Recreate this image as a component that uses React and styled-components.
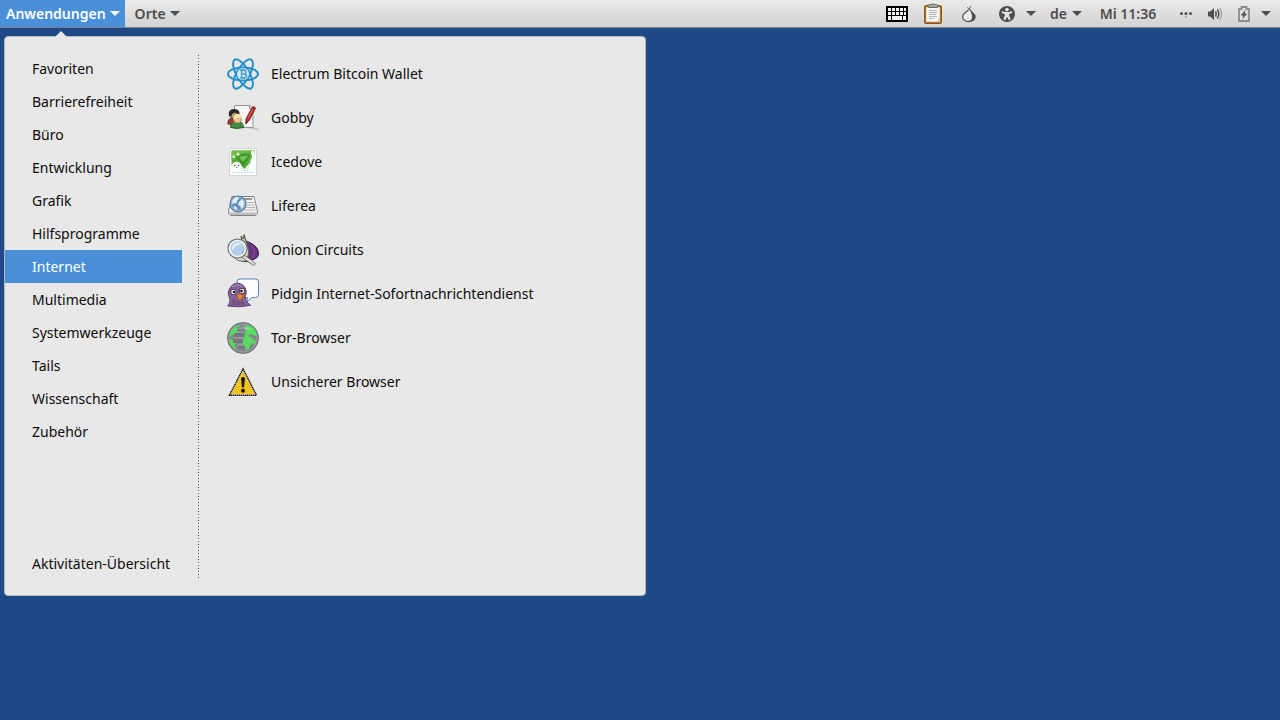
import React, { useState } from "react";
import styled, { createGlobalStyle } from "styled-components";

const GlobalStyle = createGlobalStyle`
  * {
    box-sizing: border-box;
  }
  body {
    margin: 0;
    background: #204a87;
    font-family: "Noto Sans", sans-serif;
    font-size: 14px;
    color: #0c0c0c;
  }
  button {
    font: inherit;
    color: inherit;
    border: none;
    background: none;
    padding: 0;
  }
  svg {
    display: block;
    flex: none;
  }
`;

const Desktop = styled.div`
  min-height: 100vh;
  background: #204a87;
`;

const TopBar = styled.header`
  display: flex;
  justify-content: space-between;
  height: 28px;
  padding-right: 9px;
  background: linear-gradient(#eaeaea, #d2d2d2);
  border-bottom: 1px solid #7d838c;
  color: #4d4d4d;
  font-weight: 600;
`;

const BarGroup = styled.div`
  display: flex;
  align-items: stretch;
  gap: ${({ $gap }) => $gap || 0}px;
`;

const MenuButton = styled.button`
  display: flex;
  align-items: center;
  gap: 4px;
  padding: 0 5px 0 ${({ $active }) => ($active ? 6 : 10)}px;
  background: ${({ $active }) => ($active ? "#4a90d9" : "transparent")};
  color: ${({ $active }) => ($active ? "#ffffff" : "#4d4d4d")};
`;

const TrayButton = styled.button`
  display: flex;
  align-items: center;
  gap: ${({ $gap }) => $gap || 5}px;
`;

const Clock = styled(TrayButton)`
  justify-content: center;
  min-width: 64px;
`;

const IconBox = styled.span`
  display: flex;
  align-items: center;
  justify-content: center;
  width: 24px;
  height: 24px;
`;

const Menu = styled.nav`
  position: relative;
  display: flex;
  width: min(642px, calc(100% - 8px));
  margin: 8px 4px 0;
  padding: 15px 0;
  background: #e8e8e8;
  border: 1px solid #b4b8bd;
  border-radius: 4px;
`;

const Pointer = styled.svg`
  position: absolute;
  left: 49px;
  top: -7px;
`;

const Sidebar = styled.div`
  display: flex;
  flex-direction: column;
  width: 177px;
`;

const Category = styled.button`
  height: 33px;
  padding-left: 27px;
  text-align: left;
  white-space: nowrap;
  background: ${({ $active }) => ($active ? "#4a90d9" : "transparent")};
  color: ${({ $active }) => ($active ? "#ffffff" : "#0c0c0c")};
`;

const Overview = styled(Category)`
  margin-top: 99px;
`;

const Separator = styled.div`
  width: 1px;
  margin: 3px 16px 0;
  background: repeating-linear-gradient(#5c5c5c 0 1px, transparent 1px 3px);
`;

const AppList = styled.div`
  display: flex;
  flex: 1;
  flex-direction: column;
  padding-left: 12px;
`;

const AppItem = styled.button`
  display: flex;
  align-items: center;
  gap: 12px;
  height: 44px;
  line-height: 20px;
  text-align: left;
`;

const Arrow = () => (
  <svg width="10" height="5" viewBox="0 0 10 5" fill="currentColor">
    <path d="M0 0h10L5 5z" />
  </svg>
);

const KeyboardIcon = () => (
  <svg width="22" height="16" viewBox="0 0 22 16">
    <path fill="#000" d="M0 0h22v16H0z" />
    <path
      fill="#f4f4f4"
      d="M2 2h3v3H2zM6 2h3v3H6zM10 2h3v3h-3zM14 2h3v3h-3zM18 2h2v3h-2zM2 6h3v3H2zM6 6h3v3H6zM10 6h3v3h-3zM14 6h3v3h-3zM18 6h2v3h-2zM2 10h3v4H2zM6 10h10v4H6zM17 10h3v4h-3z"
    />
  </svg>
);

const ClipboardIcon = () => (
  <svg width="20" height="22" viewBox="0 0 20 22">
    <rect x="1.500" y="2.500" width="17" height="18" rx="1.500" fill="#b8762a" stroke="#8a5514" />
    <path d="M3.500 4.500h13v14h-13z" fill="#f7f7f5" stroke="#ddd9cf" />
    <path d="M5.500 4.500V2.500q0-1 1-1h2q1.500-1.500 3 0h2q1 0 1 1v2z" fill="#a5a69f" stroke="#696a64" />
    <path d="M6 7.500h8M6 9.500h8M6 11.500h7M6 13.500h8M6 15.500h5" stroke="#b4b4b4" />
    <path d="M13 18.500l3.500-3.500v3.500z" fill="#c8c8c4" />
  </svg>
);

const OnionIcon = () => (
  <svg width="16" height="18" viewBox="0 0 16 18">
    <path
      d="M7.300 5C5.500 7 1.700 8.300 1.700 11.700c0 3 2.700 4.800 6 4.800s6.300-1.800 6.300-4.900C14 8.300 9.800 7.400 9.300 4.700"
      fill="#eeeeee"
      stroke="#505050"
      strokeWidth="1.300"
    />
    <path d="M9 5.500c1 3 2 3.500 2 6.200 0 2-1 3.700-2.800 4.700 4 .1 6.200-1.800 6.200-4.800C14.400 8.600 10.300 8 9 5.500z" fill="#505050" />
    <path d="M7.800 5.500C7.800 4 7.300 3 6.300 2.300M8.500 5C8.400 3.500 8.800 2.200 9.800 1.200" fill="none" stroke="#606060" />
  </svg>
);

const AccessibilityIcon = () => (
  <svg width="16" height="16" viewBox="0 0 16 16">
    <circle cx="8" cy="8" r="8" fill="#4d4d4d" />
    <circle cx="8" cy="3.600" r="1.800" fill="#e4e4e4" />
    <path d="M2.800 5.200l3.600.7h3.200l3.600-.7V7L10.200 8v1.600l1.500 4-1.800.6L8 10.800l-1.900 3.400-1.800-.6 1.500-4V8l-3-1z" fill="#e4e4e4" />
  </svg>
);

const NetworkIcon = () => (
  <svg width="12" height="8" viewBox="0 0 12 8">
    <circle cx="1.500" cy="3.500" r="1.500" fill="#4d4d4d" />
    <circle cx="6" cy="3.500" r="1.500" fill="#4d4d4d" />
    <circle cx="10.500" cy="3.500" r="1.500" fill="#4d4d4d" />
    <circle cx="6" cy="7" r="1.300" fill="#b0b0b0" />
  </svg>
);

const VolumeIcon = () => (
  <svg width="16" height="14" viewBox="0 0 16 14">
    <path d="M1 4.500h2.300L7 1v12L3.300 9.500H1z" fill="#4d4d4d" />
    <path d="M8.500 4.500q1.500 2.500 0 5M10.300 2.500q3 4.500 0 9" fill="none" stroke="#4d4d4d" strokeWidth="1.500" />
    <path d="M12.500 1q4.200 6 0 12" fill="none" stroke="#a8a8a8" strokeWidth="1.500" />
  </svg>
);

const BatteryIcon = () => (
  <svg width="12" height="16" viewBox="0 0 12 16">
    <path d="M1 3h2.500V1h5v2H11v12H1z" fill="#dedede" stroke="#8c8c8c" strokeWidth="1.800" />
    <path d="M7.500 4L2.700 9.500h2.600L4.300 13 9.300 7.800H6.700z" fill="#4d4d4d" />
  </svg>
);

const ElectrumIcon = () => (
  <svg width="32" height="32" viewBox="0 0 32 32">
    <g fill="none" stroke="#2490ca" strokeWidth="2">
      <ellipse cx="16" cy="16" rx="6.300" ry="16.500" transform="rotate(30 16 16)" />
      <ellipse cx="16" cy="16" rx="6.300" ry="16.500" transform="rotate(-30 16 16)" />
      <ellipse cx="16" cy="16" rx="15" ry="6.500" />
    </g>
    <circle cx="16" cy="16" r="6" fill="#cfe8f5" />
    <path
      d="M12.800 12.300h4q2.300.1 2.300 1.800T16.800 16h-2.500 2.900q2.300.2 2.300 2t-2.500 1.900h-4.200M14.600 12v8M15.300 10.800V12M17.300 10.800V12M15.300 20v1.500M17.300 20v1.500"
      fill="none"
      stroke="#4a9dcb"
      strokeWidth="1.400"
    />
  </svg>
);

const GobbyIcon = () => (
  <svg width="32" height="32" viewBox="0 0 32 32">
    <path d="M16 25l10-.5 6 2.800-1 1.200z" fill="#c6c6c6" />
    <path d="M7.500 3.500h15l3.500 3v19H7.500z" fill="#f4f5f4" stroke="#909390" />
    <path d="M22.500 3.500v3H26" fill="none" stroke="#909390" />
    <path d="M25 5.500q2-2 3.600.5l-6.200 12.200-3.600 3.600.2-5z" fill="#b03030" stroke="#731b1b" strokeWidth=".8" />
    <path d="M25.800 7l-5 9.500" stroke="#d96560" />
    <path d="M18.800 22l.2-3 1.700 1.300z" fill="#35211b" />
    <path d="M.7 22q0-6.500 6-6.500t6 6.500q-6 1.500-12 0z" fill="#a5362c" stroke="#5f211a" strokeWidth=".7" />
    <circle cx="6.700" cy="12.500" r="4.200" fill="#c49a68" stroke="#5d4228" />
    <path d="M2 14Q.7 7 7 7t5.500 6Q9 10 6.500 11q-2 1-2 3.500z" fill="#252a2a" />
    <path d="M3.500 25.500Q4 19 10 19t6.500 6.500q-6.500 1.800-13 0z" fill="#438c43" stroke="#24602a" />
    <circle cx="10.500" cy="17.200" r="3.900" fill="#e8c391" stroke="#a97b45" strokeWidth=".8" />
    <path d="M6.500 17.500Q6 12 10.700 12t4.500 4.800q-3.500-2-5.500-.8-.8 2-3.200 1.500z" fill="#f0e5ae" />
  </svg>
);

const IcedoveIcon = () => (
  <svg width="32" height="32" viewBox="0 0 32 32">
    <path d="M2.500 2.500h27v27h-27z" fill="#fdfefd" stroke="#d0d7d8" />
    <path d="M4.500 4.500h23v13l-6 8L4.500 19z" fill="#54ad36" />
    <path d="M4.500 4.500h23v3Q16 4 4.500 13z" fill="#70bd4a" />
    <path d="M9 11q6-5 14-2l-6.500 12z" fill="#3b9626" />
    <path d="M12 11q5-2 9-1l-5 6z" fill="#76bf58" />
    <path d="M4.500 19q2-3.500 5.500-3.300t4.500 4.300l3 3 6-7 1.500-6q-2-3 0-5 2-1 2.500 2l.5 7v13.500H4.500z" fill="#fdffff" />
    <path d="M14 22q4 4 8 1.500M24 13q-.5 6-4 10" fill="none" stroke="#c5ddd3" />
    <circle cx="7.800" cy="19.500" r=".8" fill="#344c3b" />
    <circle cx="11.500" cy="19.500" r=".8" fill="#344c3b" />
    <path d="M9 21.500h1.500" stroke="#7f9286" />
    <path d="M11 6l.8 1.600 1.700.6-1.700.8L11 10.500l-.8-1.500-1.700-.8 1.700-.6zM6.700 9l.7 1.200 1.300.5-1.300.7-.7 1.200-.7-1.200-1.200-.6 1.200-.6z" fill="#eefad8" />
    <path d="M5 26.500h22" stroke="#c3d7dc" strokeDasharray="2 1" />
  </svg>
);

const LifereaIcon = () => (
  <svg width="32" height="32" viewBox="0 0 32 32">
    <path d="M5 6.500h22l3.500 15q0 4-2.500 4H4q-2.500 0-2.500-4z" fill="#f0f1ef" stroke="#80837f" />
    <path d="M2 22.500h28v2.500H2z" fill="#bdbfbd" />
    <path d="M18 12.500h9M19 15h8.500M19 17.500h9M16 20h12.500" stroke="#b2b4b2" />
    <path d="M17 9h8" stroke="#7e817f" strokeWidth="1.600" />
    <circle cx="11" cy="14" r="8" fill="#6590bd" stroke="#4c7299" />
    <circle cx="11" cy="14" r="6.900" fill="none" stroke="#aac8e5" strokeWidth=".8" />
    <path d="M5 11q2-4 6-4.200l1 2-2 2-.5 2.500-2.500-.3-1.300 2zM12 12l3-3 2.200 3-.8 5-2.300 2-.7-3-2.400-1zM6 16l3 .4 1.500 2-1 1.600Q7 19 6 16z" fill="#e5edf3" />
  </svg>
);

const OnionCircuitsIcon = () => (
  <svg width="32" height="32" viewBox="0 0 32 32">
    <path d="M18 7q5 1 9 4 5 4 4.500 9T24 26q-4 3-10 1z" fill="#68337f" stroke="#381445" />
    <path d="M22 9q7 8 3 16M25 10q5 7 1 14" fill="none" stroke="#7d458f" />
    <path d="M15 8l-1-6 2.500 3L17 .5 19 7l2 4q-5 0-6-3z" fill="#c9d39d" stroke="#474b38" />
    <path d="M19 10q5 7 0 17-8 1-11-3z" fill="#e1e0d7" stroke="#6d695f" />
    <path d="M16.500 20.500l8 5.500 4 4-2 1.500L14.500 23z" fill="#dddddb" stroke="#50504f" strokeWidth=".8" />
    <circle cx="10.500" cy="14.500" r="9.500" fill="#9dbbe0" stroke="#6c706d" strokeWidth="1.200" />
    <circle cx="10.500" cy="14.500" r="8" fill="#b3cdeb" stroke="#f4f5f2" strokeWidth="1.700" />
    <path d="M5 17q-1-7 6-8.500l4 1.200Q8 11 5 17z" fill="#e5effa" />
    <path d="M11 21q5-1 6-7 1 6-6 7z" fill="#7298c8" />
  </svg>
);

const PidginIcon = () => (
  <svg width="32" height="32" viewBox="0 0 32 32">
    <path d="M13 1h15.500q3 0 3 3v12.500q0 3-3 3H25l-5 4.200.5-4.200H13q-3 0-3-3V4q0-3 3-3z" fill="#fbfdff" stroke="#5683b1" />
    <path d="M.7 28q3-3 2.200-7Q-.2 15 2.500 10.500 5.600 5 10.500 5.200q6 .3 8.200 6 1.400 4-.7 7.800.4 5 5.500 8.300-11 2.700-22.800.7z" fill="#84649a" stroke="#5d4072" />
    <path d="M5 20q5 4 11 1.500.5 3 3 5.500H3.500Q6 24.500 5 20z" fill="#735287" />
    <path d="M5 9q5-4 10-.5" fill="none" stroke="#b09bbd" />
    <circle cx="6.500" cy="14" r="2.800" fill="#f8f5e8" stroke="#453056" />
    <circle cx="15" cy="13" r="2.800" fill="#f8f5e8" stroke="#453056" />
    <circle cx="7" cy="14" r="1.300" fill="#17101c" />
    <circle cx="14.500" cy="13" r="1.300" fill="#17101c" />
    <path d="M10 17q2.300-2.500 5.500 0l3 1-4 1.500-1.200 4.200q-2-3-3.300-6.700z" fill="#e98a36" stroke="#a95517" strokeWidth=".8" />
  </svg>
);

const TorIcon = () => (
  <svg width="32" height="32" viewBox="0 0 32 32">
    <circle cx="16" cy="16" r="15.500" fill="#85858d" stroke="#73767b" />
    <circle cx="16" cy="16" r="14" fill="none" stroke="#9a9ba2" />
    <g fill="#54dc5c">
      <path d="M4 9q3-5 8-6l1 2-4 2 3 1-2 3-4 1-2 3-2.200-1zM1.800 17l4 1 3 3-1 3 2 4Q3 25 1.800 17z" />
      <path d="M18 3l6 1q5 3 6 9l-3 1-2-2-3 1-2 3-3-2 2-4-3-2zM17 15l4-1 6 3-1 4-3 2-1 4-3 1-2-5-3-3z" />
      <path d="M26 20l3.500-2q-.5 3-2.500 5z" />
    </g>
    <path d="M10 5h8v4h-8zM8 11h9v4H8zM6 17h10v4H6zM12 24h6v3h-6z" fill="#73777c" />
    <path d="M10 10h8M7 16h10M10 23h7M20 8l3 2M20 20l4-1" stroke="#a1a6a8" />
    <path d="M6 8q10-7 20 0Q17 7 6 8z" fill="#fff" opacity=".25" />
  </svg>
);

const WarningIcon = () => (
  <svg width="32" height="32" viewBox="0 0 32 32">
    <path d="M16 3.500L29.300 29H2.700z" fill="#f7c51c" stroke="#f5efda" strokeWidth="2" />
    <path d="M16 3L29.500 29.300h-27z" fill="none" stroke="#191713" strokeWidth="1.500" strokeDasharray="1.500 .5" />
    <path d="M16 6l10.800 21H5.200z" fill="#f9c11b" />
    <path d="M14 12q2-1.800 4 0l-1 9.500h-2z" fill="#171717" />
    <circle cx="16" cy="24.700" r="2" fill="#171717" />
  </svg>
);

const categories = [
  "Favoriten",
  "Barrierefreiheit",
  "Büro",
  "Entwicklung",
  "Grafik",
  "Hilfsprogramme",
  "Internet",
  "Multimedia",
  "Systemwerkzeuge",
  "Tails",
  "Wissenschaft",
  "Zubehör",
];

const apps = [
  { name: "Electrum Bitcoin Wallet", icon: <ElectrumIcon /> },
  { name: "Gobby", icon: <GobbyIcon /> },
  { name: "Icedove", icon: <IcedoveIcon /> },
  { name: "Liferea", icon: <LifereaIcon /> },
  { name: "Onion Circuits", icon: <OnionCircuitsIcon /> },
  { name: "Pidgin Internet-Sofortnachrichtendienst", icon: <PidginIcon /> },
  { name: "Tor-Browser", icon: <TorIcon /> },
  { name: "Unsicherer Browser", icon: <WarningIcon /> },
];

const App = () => {
  const [selected, setSelected] = useState("Internet");

  return (
    <Desktop>
      <GlobalStyle />
      <TopBar>
        <BarGroup>
          <MenuButton $active>
            Anwendungen
            <Arrow />
          </MenuButton>
          <MenuButton>
            Orte
            <Arrow />
          </MenuButton>
        </BarGroup>
        <BarGroup $gap={14}>
          <BarGroup $gap={12}>
            <TrayButton aria-label="Bildschirmtastatur">
              <IconBox><KeyboardIcon /></IconBox>
            </TrayButton>
            <TrayButton aria-label="Zwischenablage">
              <IconBox><ClipboardIcon /></IconBox>
            </TrayButton>
            <TrayButton aria-label="Tor-Status">
              <IconBox><OnionIcon /></IconBox>
            </TrayButton>
          </BarGroup>
          <TrayButton $gap={7} aria-label="Barrierefreiheit">
            <IconBox><AccessibilityIcon /></IconBox>
            <Arrow />
          </TrayButton>
          <TrayButton>
            de
            <Arrow />
          </TrayButton>
          <Clock>Mi 11:36</Clock>
          <TrayButton aria-label="System">
            <IconBox><NetworkIcon /></IconBox>
            <IconBox><VolumeIcon /></IconBox>
            <IconBox><BatteryIcon /></IconBox>
            <Arrow />
          </TrayButton>
        </BarGroup>
      </TopBar>

      <Menu>
        <Pointer width="14" height="8" viewBox="0 0 14 8">
          <path d="M1 7l6-6 6 6v1H1z" fill="#e8e8e8" />
        </Pointer>
        <Sidebar>
          {categories.map((name) => (
            <Category key={name} $active={name === selected} onClick={() => setSelected(name)}>
              {name}
            </Category>
          ))}
          <Overview>Aktivitäten-Übersicht</Overview>
        </Sidebar>
        <Separator />
        <AppList>
          {apps.map((app) => (
            <AppItem key={app.name}>
              {app.icon}
              {app.name}
            </AppItem>
          ))}
        </AppList>
      </Menu>
    </Desktop>
  );
};

export default App;
